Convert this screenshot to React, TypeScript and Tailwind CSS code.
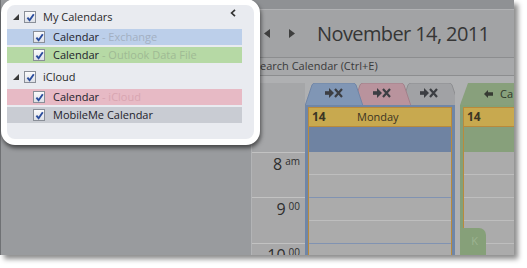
import React from "react";

function CheckBox() {
  return (
    <span className="flex h-[12px] w-[12px] shrink-0 items-center justify-center border border-[#8a8f98] bg-gradient-to-b from-[#fbfbfc] to-[#dde0e6]">
      <svg width="9" height="9" viewBox="0 0 9 9">
        <path d="M1.4 4.6 L3.6 7.2 L7.8 1.3" fill="none" stroke="#2b4d9d" strokeWidth="1.9" />
      </svg>
    </span>
  );
}

function GroupHeader({ label, className }: { label: string; className?: string }) {
  return (
    <div className={`flex h-[18px] items-center pl-[6px] ${className ?? ""}`}>
      <svg width="6" height="6" viewBox="0 0 6 6">
        <polygon points="6,0 6,6 0,6" fill="#3a3a3a" />
      </svg>
      <span className="ml-[5px]">
        <CheckBox />
      </span>
      <span className="ml-[7px] text-[11px] text-[#2a2a2a]">{label}</span>
    </div>
  );
}

function CalRow({
  name,
  source,
  bg,
  sourceColor,
  className,
}: {
  name: string;
  source?: string;
  bg: string;
  sourceColor?: string;
  className?: string;
}) {
  return (
    <div className={`flex h-[16px] items-center pl-[26px] ${bg} ${className ?? ""}`}>
      <CheckBox />
      <span className="ml-[8px] whitespace-nowrap text-[11px] text-[#1d1d2b]">
        {name}
        {source && <span className={sourceColor}> - {source}</span>}
      </span>
    </div>
  );
}

function Callout() {
  return (
    <div className="absolute left-0 top-[-1px] h-[146px] w-[259px] rounded-[14px] border-[6px] border-white bg-[#e9ebf0] shadow-[1px_3px_4px_rgba(0,0,0,0.55)]">
      <svg className="absolute left-[223px] top-[4px]" width="6" height="8" viewBox="0 0 6 8">
        <path d="M5 0.8 L1.6 4 L5 7.2" fill="none" stroke="#333" strokeWidth="1.7" />
      </svg>
      <div className="flex flex-col pr-[12px] pt-[3px]">
        <GroupHeader label="My Calendars" />
        <CalRow name="Calendar" source="Exchange" bg="bg-[#bccfea]" sourceColor="text-[#a3afc2]" className="mt-[3px]" />
        <CalRow name="Calendar" source="Outlook Data File" bg="bg-[#b6d9a5]" sourceColor="text-[#9fba94]" className="mt-[2px]" />
        <GroupHeader label="iCloud" className="mt-[5px]" />
        <CalRow name="Calendar" source="iCloud" bg="bg-[#e7bac5]" sourceColor="text-[#d8a5b1]" className="mt-[3px]" />
        <CalRow name="MobileMe Calendar" bg="bg-[#c9ccd3]" className="mt-[2px]" />
      </div>
    </div>
  );
}

function TabIcon({ x }: { x: number }) {
  return (
    <g transform={`translate(${x},10)`} fill="#3c3e43" stroke="#3c3e43">
      <rect x="-9" y="-1.8" width="5" height="3.6" stroke="none" />
      <polygon points="-5,-5 0,0 -5,5" stroke="none" />
      <path d="M1 -4 L8 4 M1 4 L8 -4" strokeWidth="2.2" fill="none" />
    </g>
  );
}

function TimeLabel({ big, small }: { big: string; small: string }) {
  return (
    <div className="flex justify-end pr-[5px] pt-[3px] leading-none text-[#2e2e2e]">
      <span className="text-[16px]">{big}</span>
      <span className="ml-[3px] text-[10px]">{small}</span>
    </div>
  );
}

function Slots({ hourLine }: { hourLine: string }) {
  return (
    <div className="flex shrink-0 flex-col bg-[#ababab]">
      <div className="h-[22px] shrink-0" />
      <div className="h-[23px] shrink-0 border-t border-[#bebebe]" />
      <div className={`h-[23px] shrink-0 border-t ${hourLine}`} />
      <div className="h-[23px] shrink-0 border-t border-[#bebebe]" />
      <div className={`h-[23px] shrink-0 border-t ${hourLine}`} />
    </div>
  );
}

function CalendarPane() {
  return (
    <div className="flex min-w-0 flex-1 flex-col">
      <div className="h-[10px] shrink-0 border-b border-[#b1b2b4] bg-[#8f9194]" />
      <div className="flex h-[47px] shrink-0 items-center bg-[#a2a3a5] pl-[12px]">
        <svg width="6" height="9" viewBox="0 0 6 9">
          <polygon points="6,0 6,9 0,4.5" fill="#3e3e3e" />
        </svg>
        <svg className="ml-[19px]" width="6" height="9" viewBox="0 0 6 9">
          <polygon points="0,0 0,9 6,4.5" fill="#3e3e3e" />
        </svg>
        <span className="ml-[22px] whitespace-nowrap text-[20px] tracking-[-0.6px] text-[#363636]">November 14, 2011</span>
      </div>
      <div className="flex h-[19px] shrink-0 items-center border-y border-[#8c8d8f] bg-[#a7a8aa] pl-[2px] text-[11px] text-[#3a3a3a]">
        Search Calendar (Ctrl+E)
      </div>
      <div className="flex min-h-0 flex-1 overflow-hidden bg-[#afb0b2] pt-[7px]">
        <div className="flex w-[53px] shrink-0 flex-col bg-[#a8a8a9]">
          <div className="h-[69px] shrink-0 bg-[#a5a6a8]" />
          <div className="h-[45px] shrink-0 border-t border-[#c2c2c2]">
            <TimeLabel big="8" small="am" />
          </div>
          <div className="h-[46px] shrink-0 border-t border-[#c2c2c2]">
            <TimeLabel big="9" small="00" />
          </div>
          <div className="h-[30px] shrink-0 border-t border-[#c2c2c2]">
            <TimeLabel big="10" small="00" />
          </div>
        </div>

        <div className="flex w-[150px] shrink-0 flex-col">
          <svg width="150" height="22" viewBox="0 0 150 22" className="block shrink-0">
            <path d="M96 23 L103 2 Q104 0 106 0 L144 0 Q146 0 147 2 L154 23 Z" fill="#a1a2a5" stroke="#8d8e91" />
            <path d="M48 23 L55 2 Q56 0 58 0 L96 0 Q98 0 99 2 L106 23 Z" fill="#b9939d" stroke="#a2808a" />
            <path d="M0 23 L7 2 Q8 0 10 0 L48 0 Q50 0 51 2 L58 23 Z" fill="#8096b5" stroke="#7085a6" />
            <TabIcon x={29} />
            <TabIcon x={77} />
            <TabIcon x={124} />
          </svg>
          <div className="flex shrink-0 flex-col border-x-[3px] border-t-[2px] border-[#7086a6]">
            <div className="flex flex-col border-x border-[#b98a3c]">
              <div className="flex h-[20px] shrink-0 items-center border-y border-[#b98a3c] bg-[#c8a94f] text-[11px] text-[#3b3524]">
                <span className="w-[48px] pl-[3px] text-[12px] font-bold">14</span>
                <span>Monday</span>
              </div>
              <div className="h-[25px] shrink-0 bg-[#6f83a2]" />
              <Slots hourLine="border-[#8193b2]" />
            </div>
          </div>
        </div>

        <div className="ml-[5px] flex min-w-0 flex-1 flex-col">
          <div className="flex h-[22px] shrink-0 items-center overflow-hidden whitespace-nowrap bg-[#88a07c] pl-[24px] text-[11px] text-[#2f3a2a] [clip-path:polygon(8px_0,100%_0,100%_100%,0_100%)]">
            <svg className="shrink-0" width="9" height="8" viewBox="0 0 9 8">
              <polygon points="0,4 4,0 4,2.3 9,2.3 9,5.7 4,5.7 4,8" fill="#363b33" />
            </svg>
            <span className="ml-[7px]">Ca</span>
          </div>
          <div className="relative flex shrink-0 flex-col border-l-[3px] border-t-[2px] border-[#84a078]">
            <div className="flex flex-col border-l border-[#b98a3c]">
              <div className="flex h-[20px] shrink-0 items-center border-y border-[#b98a3c] bg-[#c8a94f] text-[#3b3524]">
                <span className="pl-[3px] text-[12px] font-bold">14</span>
              </div>
              <div className="h-[25px] shrink-0 bg-[#87a07b]" />
              <Slots hourLine="border-[#bebebe]" />
            </div>
            <div className="absolute left-[-3px] top-[121px] flex h-[27px] w-[26px] items-center justify-center rounded-tr-[7px] bg-[#86a079] pl-[3px] text-[11px] text-[#9cb391]">
              K
            </div>
          </div>
        </div>
      </div>
    </div>
  );
}

export default function App() {
  return (
    <div className="h-[268px] w-[527px] bg-white font-['Open_Sans',sans-serif]">
      <div className="relative flex h-[255px] w-[514px] border-l border-[#6f7174] bg-[#999b9e] shadow-[4px_4px_5px_rgba(0,0,0,0.45)]">
        <div className="h-full w-[251px] shrink-0 border-r border-[#b3b4b6] bg-[#999b9e]" />
        <CalendarPane />
        <Callout />
      </div>
    </div>
  );
}
